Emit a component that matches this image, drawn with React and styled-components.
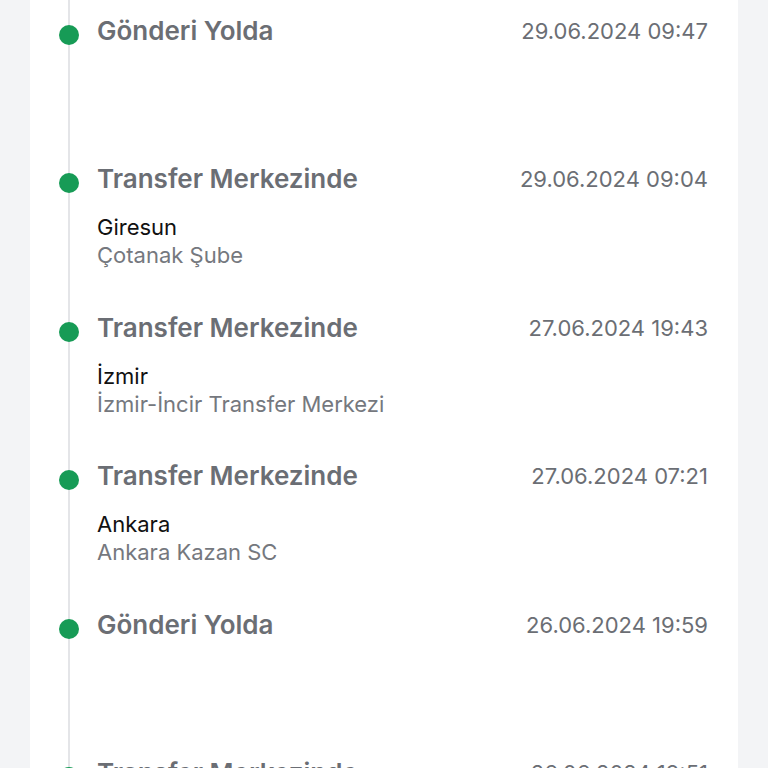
import React from "react";
import styled, { createGlobalStyle } from "styled-components";

const GlobalStyle = createGlobalStyle`
  body {
    margin: 0;
    background: #f3f4f6;
    font-family: Inter, "Noto Sans", "Liberation Sans", sans-serif;
  }
`;

const Page = styled.div`
  padding: 0 30px;
  height: 768px;
  overflow: hidden;
`;

const Card = styled.div`
  background: #ffffff;
  padding: 15px 30px 0 29px;
  min-height: 900px;
`;

const List = styled.div`
  position: relative;
  &::before {
    content: "";
    position: absolute;
    left: 9px;
    top: -20px;
    bottom: 0;
    width: 2px;
    background: #e4e5e8;
  }
`;

const Item = styled.div`
  position: relative;
  display: grid;
  grid-template-columns: 20px 1fr auto;
  column-gap: 18px;
  height: 148.4px;
  align-content: start;
`;

const Dot = styled.span`
  width: 20px;
  height: 20px;
  border-radius: 50%;
  background: #179b56;
  margin-top: 10px;
`;

const Body = styled.div`
  display: flex;
  flex-direction: column;
`;

const Title = styled.div`
  font-size: 26px;
  line-height: 32px;
  font-weight: 600;
  color: #6b6e74;
`;

const Date = styled.div`
  font-size: 22px;
  line-height: 32px;
  color: #6b6e74;
`;

const Place = styled.div`
  font-size: 22px;
  line-height: 28px;
  color: ${(p) => (p.muted ? "#75787e" : "#111111")};
  margin-top: ${(p) => (p.first ? "18px" : "0")};
`;

const events = [
  { title: "Gönderi Yolda", date: "29.06.2024 09:47" },
  { title: "Transfer Merkezinde", date: "29.06.2024 09:04", city: "Giresun", branch: "Çotanak Şube" },
  { title: "Transfer Merkezinde", date: "27.06.2024 19:43", city: "İzmir", branch: "İzmir-İncir Transfer Merkezi" },
  { title: "Transfer Merkezinde", date: "27.06.2024 07:21", city: "Ankara", branch: "Ankara Kazan SC" },
  { title: "Gönderi Yolda", date: "26.06.2024 19:59" },
  { title: "Transfer Merkezinde", date: "26.06.2024 19:51" },
];

export default function App() {
  return (
    <>
      <GlobalStyle />
      <Page>
        <Card>
          <List>
            {events.map((e, i) => (
              <Item key={i}>
                <Dot />
                <Body>
                  <Title>{e.title}</Title>
                  {e.city && <Place first>{e.city}</Place>}
                  {e.branch && <Place muted>{e.branch}</Place>}
                </Body>
                <Date>{e.date}</Date>
              </Item>
            ))}
          </List>
        </Card>
      </Page>
    </>
  );
}
